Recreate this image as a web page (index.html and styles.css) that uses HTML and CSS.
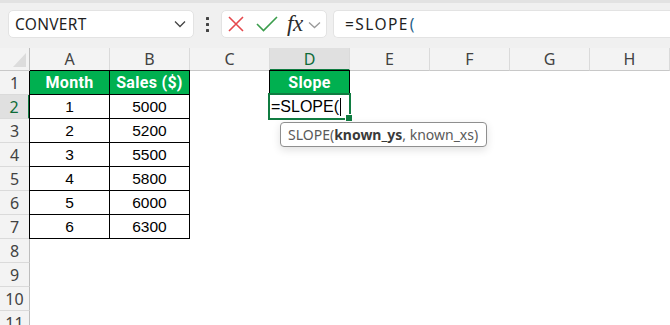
FILE: index.html
```html
<!DOCTYPE html>
<html>
<head>
<meta charset="utf-8">
<link rel="stylesheet" href="styles.css">
</head>
<body>
<div class="app">
  <div class="toolbar">
    <div class="namebox">
      <span class="nb-text">CONVERT</span>
      <svg class="nb-chev" width="12" height="8" viewBox="0 0 12 8"><path d="M1 1.5 L6 6.5 L11 1.5" fill="none" stroke="#444" stroke-width="1.3"/></svg>
    </div>
    <div class="dots"><i></i><i></i><i></i></div>
    <div class="fxbox">
      <svg class="ic-x" width="16" height="16" viewBox="0 0 16 16"><path d="M1 1 L15 15 M15 1 L1 15" stroke="#e5484d" stroke-width="1.6" fill="none"/></svg>
      <svg class="ic-ok" width="22" height="16" viewBox="0 0 22 16"><path d="M1 8 L7.5 14.5 L21 1" stroke="#3b9d4c" stroke-width="1.6" fill="none"/></svg>
      <span class="fx">fx</span>
      <svg class="ic-chev" width="13" height="8" viewBox="0 0 13 8"><path d="M1 1.5 L6.5 6.5 L12 1.5" fill="none" stroke="#9a9a9a" stroke-width="1.3"/></svg>
    </div>
    <div class="formula"><span>=SLOPE</span><span class="paren">(</span></div>
  </div>

  <div class="sheet">
    <div class="corner"></div>
    <div class="ch">A</div><div class="ch">B</div><div class="ch">C</div><div class="ch act">D</div><div class="ch">E</div><div class="ch">F</div><div class="ch">G</div><div class="ch">H</div>

    <div class="rh">1</div>
    <div class="c t g tl tt">Month</div><div class="c t g tt">Sales ($)</div><div class="c"></div><div class="c t g tl tt">Slope</div><div class="c"></div><div class="c"></div><div class="c"></div><div class="c"></div>

    <div class="rh act">2</div>
    <div class="c t tl">1</div><div class="c t">5000</div><div class="c"></div><div class="c edit"><span class="etext">=SLOPE(</span><span class="caret"></span><div class="tip">SLOPE(<b>known_ys</b>, known_xs)</div></div><div class="c"></div><div class="c"></div><div class="c"></div><div class="c"></div>

    <div class="rh">3</div>
    <div class="c t tl">2</div><div class="c t">5200</div><div class="c"></div><div class="c"></div><div class="c"></div><div class="c"></div><div class="c"></div><div class="c"></div>

    <div class="rh">4</div>
    <div class="c t tl">3</div><div class="c t">5500</div><div class="c"></div><div class="c"></div><div class="c"></div><div class="c"></div><div class="c"></div><div class="c"></div>

    <div class="rh">5</div>
    <div class="c t tl">4</div><div class="c t">5800</div><div class="c"></div><div class="c"></div><div class="c"></div><div class="c"></div><div class="c"></div><div class="c"></div>

    <div class="rh">6</div>
    <div class="c t tl">5</div><div class="c t">6000</div><div class="c"></div><div class="c"></div><div class="c"></div><div class="c"></div><div class="c"></div><div class="c"></div>

    <div class="rh">7</div>
    <div class="c t tl">6</div><div class="c t">6300</div><div class="c"></div><div class="c"></div><div class="c"></div><div class="c"></div><div class="c"></div><div class="c"></div>

    <div class="rh">8</div>
    <div class="c"></div><div class="c"></div><div class="c"></div><div class="c"></div><div class="c"></div><div class="c"></div><div class="c"></div><div class="c"></div>

    <div class="rh">9</div>
    <div class="c"></div><div class="c"></div><div class="c"></div><div class="c"></div><div class="c"></div><div class="c"></div><div class="c"></div><div class="c"></div>

    <div class="rh">10</div>
    <div class="c"></div><div class="c"></div><div class="c"></div><div class="c"></div><div class="c"></div><div class="c"></div><div class="c"></div><div class="c"></div>

    <div class="rh">11</div>
    <div class="c"></div><div class="c"></div><div class="c"></div><div class="c"></div><div class="c"></div><div class="c"></div><div class="c"></div><div class="c"></div>
  </div>
</div>
</body>
</html>
```

FILE: styles.css
```css
* { box-sizing: border-box; }
html, body { margin: 0; padding: 0; }
body {
  width: 670px;
  height: 325px;
  overflow: hidden;
  background: #ffffff;
  font-family: "Liberation Sans", Arial, sans-serif;
}
.app { width: 670px; height: 325px; overflow: hidden; }

/* toolbar */
.toolbar {
  height: 48px;
  background: #f0f0f0;
  border-top: 3px solid #e2e2e2;
  display: flex;
  align-items: flex-start;
  padding-top: 7px;
  padding-left: 8px;
  white-space: nowrap;
}
.namebox {
  width: 186px;
  height: 28px;
  background: #fff;
  border: 1px solid #e3e3e3;
  border-radius: 5px;
  display: flex;
  align-items: center;
  padding-left: 6px;
  padding-right: 7px;
  font-family: "Noto Sans", "Open Sans", sans-serif;
  font-size: 15.5px;
  color: #1f1f1f;
}
.nb-text { flex: 1; letter-spacing: 0.3px; }
.nb-chev { display: block; }
.dots {
  width: 27px;
  height: 28px;
  display: flex;
  flex-direction: column;
  align-items: center;
  justify-content: center;
  gap: 3px;
}
.dots i { display: block; width: 3px; height: 3px; background: #444; border-radius: 0.5px; }
.fxbox {
  width: 106px;
  height: 28px;
  background: #fff;
  border: 1px solid #e3e3e3;
  border-radius: 5px;
  display: flex;
  align-items: center;
  padding-left: 6px;
}
.ic-x { display: block; margin-right: 12px; }
.ic-ok { display: block; margin-right: 9px; }
.fx {
  font-family: "Liberation Serif", "Times New Roman", serif;
  font-style: italic;
  font-size: 23px;
  color: #2b2b2b;
  line-height: 1;
  margin-top: -1px;
  margin-right: 5px;
  letter-spacing: -0.5px;
}
.ic-chev { display: block; margin-top: 2px; }
.formula {
  margin-left: 6px;
  flex: 1;
  height: 28px;
  background: #fff;
  border: 1px solid #e3e3e3;
  border-right: none;
  border-radius: 5px 0 0 5px;
  display: flex;
  align-items: center;
  padding-left: 11px;
  font-family: "Noto Sans", "Open Sans", sans-serif;
  font-size: 15.5px;
  letter-spacing: 1.4px;
  color: #1f1f1f;
}
.paren { color: #1f5f8a; margin-left: 1px; }

/* sheet */
.sheet {
  display: grid;
  grid-template-columns: 30px repeat(8, 80px);
  grid-template-rows: 23px repeat(11, 24px);
  background: #fff;
}
.corner {
  background: #f3f3f3;
  border-right: 1px solid #bdbdbd;
  border-bottom: 1px solid #c8c8c8;
  position: relative;
}
.corner::after {
  content: "";
  position: absolute;
  right: 3px;
  bottom: 3px;
  width: 0; height: 0;
  border-left: 13px solid transparent;
  border-bottom: 14px solid #dcdcdc;
}
.ch {
  background: #f3f3f3;
  border-right: 1px solid #dadada;
  border-bottom: 1px solid #c8c8c8;
  display: flex;
  align-items: center;
  justify-content: center;
  font-family: "Noto Sans", "Open Sans", sans-serif;
  font-size: 16px;
  color: #424242;
}
.ch.act {
  background: #e0e0e0;
  border-bottom: 2px solid #107c41;
  color: #0e6b38;
}
.rh {
  background: #f3f3f3;
  border-right: 1px solid #bdbdbd;
  border-bottom: 1px solid #dadada;
  display: flex;
  align-items: center;
  justify-content: center;
  font-family: "Noto Sans", "Open Sans", sans-serif;
  font-size: 16px;
  color: #424242;
}
.rh.act {
  background: #e0e0e0;
  border-right: 2px solid #107c41;
  color: #0e6b38;
}
.c {
  border-right: 1px solid #ffffff;
  border-bottom: 1px solid #ffffff;
  display: flex;
  align-items: center;
  justify-content: center;
  font-size: 15.5px;
  color: #000;
  white-space: nowrap;
}
.t { border-right-color: #000; border-bottom-color: #000; }
.tl { box-shadow: -1px 0 0 #000; }
.tt { box-shadow: 0 -1px 0 #000; }
.tl.tt { box-shadow: -1px 0 0 #000, 0 -1px 0 #000, -1px -1px 0 #000; }
.g {
  background: #00b050;
  color: #fff;
  font-family: Roboto, "Liberation Sans", sans-serif;
  font-weight: 700;
  font-size: 16px;
  letter-spacing: 0.3px;
}

/* active edited cell */
.edit {
  position: relative;
  justify-content: flex-start;
  padding-left: 1px;
  overflow: visible;
}
.edit::before {
  content: "";
  position: absolute;
  left: -2px; top: -2px; right: -2px; bottom: -2px;
  border: 2px solid #107c41;
  pointer-events: none;
}
.edit::after {
  content: "";
  position: absolute;
  right: -4px;
  bottom: -4px;
  width: 6px;
  height: 6px;
  background: #107c41;
  border: 1px solid #fff;
}
.etext { font-size: 16px; color: #000; }
.caret {
  display: inline-block;
  width: 1px;
  height: 18px;
  background: #000;
  margin-left: 1px;
}
.tip {
  position: absolute;
  left: 10px;
  top: 27px;
  width: 207px;
  height: 25px;
  background: #fff;
  border: 1px solid #8f8f8f;
  border-radius: 4px;
  box-shadow: 0 3px 8px rgba(0,0,0,0.12);
  padding-left: 7px;
  display: flex;
  align-items: center;
  font-family: "Noto Sans", "Open Sans", sans-serif;
  font-size: 14px;
  color: #5a5a5a;
  z-index: 5;
}
.tip b { color: #3a3a3a; font-weight: 700; }
```
